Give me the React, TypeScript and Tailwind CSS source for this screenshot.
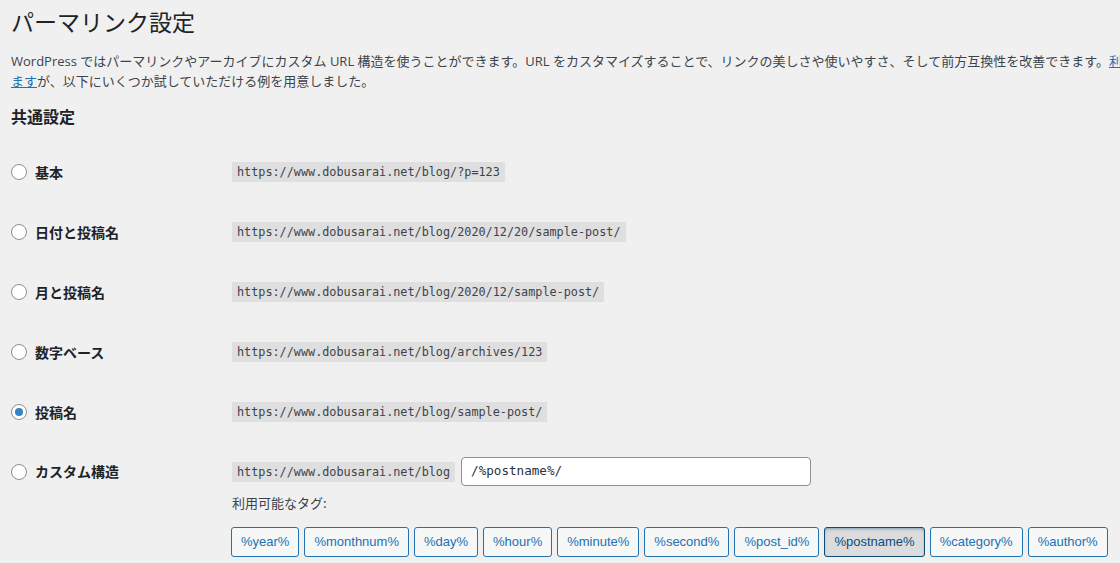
import React from "react";

const URL_BASE = "https://www.dobusarai.net/blog";

const rows = [
  { label: "基本", code: URL_BASE + "/?p=123", checked: false },
  { label: "日付と投稿名", code: URL_BASE + "/2020/12/20/sample-post/", checked: false },
  { label: "月と投稿名", code: URL_BASE + "/2020/12/sample-post/", checked: false },
  { label: "数字ベース", code: URL_BASE + "/archives/123", checked: false },
  { label: "投稿名", code: URL_BASE + "/sample-post/", checked: true },
];

const tags = [
  "%year%",
  "%monthnum%",
  "%day%",
  "%hour%",
  "%minute%",
  "%second%",
  "%post_id%",
  "%postname%",
  "%category%",
  "%author%",
];

function Radio({ checked }: { checked: boolean }) {
  return (
    <span className="flex h-4 w-4 shrink-0 items-center justify-center rounded-full border border-[#8c8f94] bg-white">
      {checked && <span className="h-2 w-2 rounded-full bg-[#3582c4]" />}
    </span>
  );
}

function Code({ children }: { children: React.ReactNode }) {
  return (
    <code className="inline-block h-[20px] bg-[#dfdfe0] px-[5px] text-[11.8px] leading-[20px] text-[#3c434a] [font-family:'DejaVu_Sans_Mono','Liberation_Mono',monospace]">
      {children}
    </code>
  );
}

export default function App() {
  return (
    <div className="h-[563px] w-[1120px] overflow-hidden bg-[#f0f0f1] pl-[11px] text-[#1d2327] [font-family:'Liberation_Sans','Noto_Sans_CJK_JP',sans-serif]">
      <h1 className="mt-[6px] text-[23px] font-normal leading-[30px] text-[#1d2327] [font-family:'Noto_Sans_CJK_JP',sans-serif]">
        パーマリンク設定
      </h1>
      <p className="mt-[16px] text-[13px] leading-[19.5px] text-[#3c434a] [font-family:'Open_Sans','Noto_Sans_CJK_JP',sans-serif]">
        <span className="block whitespace-nowrap">
          WordPress ではパーマリンクやアーカイブにカスタム URL 構造を使うことができます。URL をカスタマイズすることで、リンクの美しさや使いやすさ、そして前方互換性を改善できます。
          <a className="text-[#2271b1] underline">利用可能なタグが多数用意されてい</a>
        </span>
        <span className="block whitespace-nowrap">
          <a className="text-[#2271b1] underline">ます</a>が、以下にいくつか試していただける例を用意しました。
        </span>
      </p>
      <h2 className="mt-[13px] text-[16px] font-bold leading-[24px] [font-family:'Noto_Sans_CJK_JP',sans-serif]">
        共通設定
      </h2>
      <div className="mt-[14px] flex flex-col">
        {rows.map((r) => (
          <div key={r.label} className="flex h-[60px] items-center">
            <div className="flex w-[221px] shrink-0 items-center gap-2">
              <Radio checked={r.checked} />
              <span className="text-[14px] font-bold [font-family:'Noto_Sans_CJK_JP',sans-serif]">{r.label}</span>
            </div>
            <Code>{r.code}</Code>
          </div>
        ))}
        <div className="flex items-start pt-[15px]">
          <div className="flex h-[29px] w-[221px] shrink-0 items-center gap-2">
            <Radio checked={false} />
            <span className="text-[14px] font-bold [font-family:'Noto_Sans_CJK_JP',sans-serif]">カスタム構造</span>
          </div>
          <div className="flex flex-col">
            <div className="flex h-[29px] items-center gap-[6px]">
              <Code>{URL_BASE}</Code>
              <div className="flex h-[29px] w-[350px] items-center rounded-[4px] border border-[#8c8f94] bg-white px-[9px] text-[12.6px] text-[#2c3338] [font-family:'DejaVu_Sans_Mono','Liberation_Mono',monospace]">
                /%postname%/
              </div>
            </div>
            <div className="mt-[7px] text-[13px] leading-[19.5px] text-[#3c434a] [font-family:'Noto_Sans_CJK_JP',sans-serif]">
              利用可能なタグ:
            </div>
            <div className="-ml-px mt-[14px] flex flex-nowrap gap-[5px]">
              {tags.map((t) => {
                const active = t === "%postname%";
                return (
                  <button
                    key={t}
                    className={
                      active
                        ? "h-[30px] shrink-0 rounded-[3px] border border-[#0a4b78] bg-[#dcdcde] px-[9px] text-[13px] text-[#0a4b78] shadow-[inset_0_2px_5px_-3px_#0a4b78]"
                        : "h-[30px] shrink-0 rounded-[3px] border border-[#2271b1] bg-[#f6f7f7] px-[9px] text-[13px] text-[#2271b1]"
                    }
                  >
                    {t}
                  </button>
                );
              })}
            </div>
          </div>
        </div>
      </div>
    </div>
  );
}
